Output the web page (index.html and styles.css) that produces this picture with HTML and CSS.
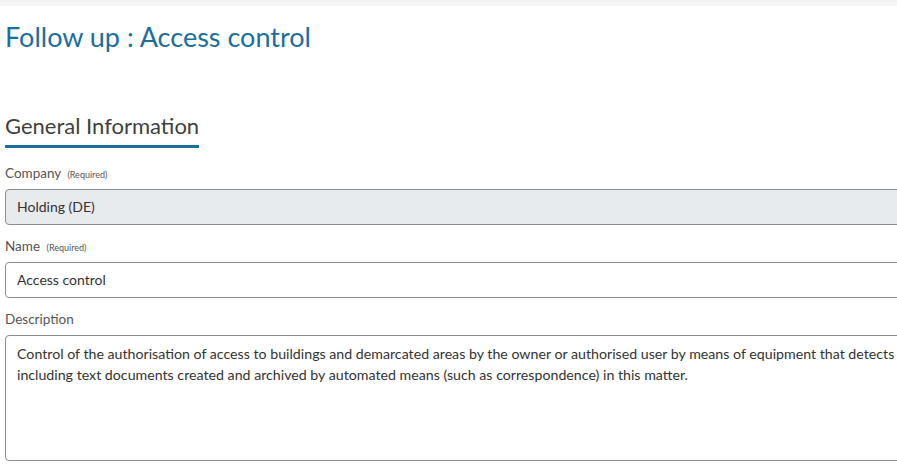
FILE: index.html
```html
<!DOCTYPE html>
<html lang="en">
<head>
  <meta charset="UTF-8" />
  <meta name="viewport" content="width=device-width, initial-scale=1.0"/>
  <title>Follow up : Access control</title>
  <link rel="stylesheet" href="styles.css">
</head>
<body>
  <div class="topbar"></div>

  <main class="page">
    <h1 class="page-title">Follow up : Access control</h1>

    <section class="section">
      <h2 class="section-title">General Information</h2>

      <div class="field">
        <label class="field-label">Company <span class="required">(Required)</span></label>
        <div class="input input-disabled">Holding (DE)</div>
      </div>

      <div class="field">
        <label class="field-label">Name <span class="required">(Required)</span></label>
        <div class="input">Access control</div>
      </div>

      <div class="field">
        <label class="field-label">Description</label>
        <div class="input textarea">Control of the authorisation of access to buildings and demarcated areas by the owner or authorised user by means of equipment that detects<br>including text documents created and archived by automated means (such as correspondence) in this matter.</div>
      </div>
    </section>
  </main>
</body>
</html>
```

FILE: styles.css
```css
* {
  box-sizing: border-box;
  margin: 0;
  padding: 0;
  font-family: 'Lato', 'Open Sans', sans-serif;
}
body {
  background: #fff;
  overflow: hidden;
  color: #333;
}
.topbar {
  height: 6px;
  background: #f4f4f4;
}
.page {
  padding: 0 0 0 5px;
  width: 1000px;
}
.page-title {
  font-size: 27px;
  font-weight: 400;
  color: #1b6f9d;
  line-height: 34px;
  margin-top: 14px;
}
.section {
  margin-top: 59px;
}
.section-title {
  display: inline-block;
  font-size: 22px;
  font-weight: 400;
  color: #3f3f3f;
  line-height: 26px;
  padding-bottom: 6px;
  border-bottom: 3px solid #1b6f9d;
  margin-bottom: 16px;
}
.field {
  margin-bottom: 12px;
}
.field-label {
  display: block;
  font-size: 13.5px;
  color: #555;
  line-height: 18px;
  margin-bottom: 7px;
}
.required {
  font-size: 9px;
  line-height: 1;
  margin-left: 3px;
}
.input {
  height: 36px;
  border: 1px solid #8c8c8c;
  border-radius: 4px;
  padding: 0 11px;
  font-size: 14px;
  line-height: 34px;
  color: #333;
  white-space: nowrap;
  overflow: hidden;
}
.input-disabled {
  background: #e8ebee;
}
.textarea {
  height: 126px;
  line-height: 21px;
  padding-top: 7px;
  font-size: 14.2px;
}
```
